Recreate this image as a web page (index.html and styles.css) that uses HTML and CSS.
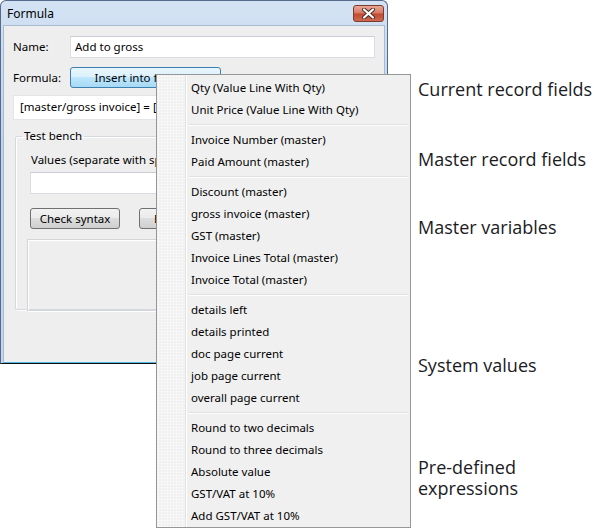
FILE: index.html
```html
<!DOCTYPE html>
<html>
<head>
<meta charset="utf-8">
<link rel="stylesheet" href="styles.css">
</head>
<body>
<div class="canvas">
  <div class="dialog">
    <div class="titlebar">
      <span class="title">Formula</span>
      <div class="close">
        <svg width="17" height="11" viewBox="0 0 17 11">
          <path d="M4 1.5 L13 9.5 M13 1.5 L4 9.5" stroke="#4a2a24" stroke-width="4" stroke-linecap="round"/>
          <path d="M4 1.5 L13 9.5 M13 1.5 L4 9.5" stroke="#ffffff" stroke-width="2.2" stroke-linecap="round"/>
        </svg>
      </div>
    </div>
    <div class="client">
      <div class="row row-name">
        <span class="lbl">Name:</span>
        <div class="input name-input">Add to gross</div>
      </div>
      <div class="row row-formula">
        <span class="lbl">Formula:</span>
        <div class="btn btn-hover insert-btn">Insert into formula</div>
      </div>
      <div class="input formula-field">[master/gross invoice] = [master/gross invoice] + [master/GST]</div>
      <fieldset class="group">
        <legend>Test bench</legend>
        <div class="values-lbl">Values (separate with spaces):</div>
        <div class="input values-input"></div>
        <div class="btn-row">
          <div class="btn check-btn">Check syntax</div>
          <div class="btn eval-btn">Evaluate</div>
        </div>
        <div class="result"></div>
      </fieldset>
    </div>
  </div>

  <div class="popup">
    <div class="menu">
      <div class="gutter"></div>
      <div class="items">
        <div class="item">Qty (Value Line With Qty)</div>
        <div class="item">Unit Price (Value Line With Qty)</div>
        <div class="sep"></div>
        <div class="item">Invoice Number (master)</div>
        <div class="item">Paid Amount (master)</div>
        <div class="sep"></div>
        <div class="item">Discount (master)</div>
        <div class="item">gross invoice (master)</div>
        <div class="item">GST (master)</div>
        <div class="item">Invoice Lines Total (master)</div>
        <div class="item">Invoice Total (master)</div>
        <div class="sep"></div>
        <div class="item">details left</div>
        <div class="item">details printed</div>
        <div class="item">doc page current</div>
        <div class="item">job page current</div>
        <div class="item">overall page current</div>
        <div class="sep"></div>
        <div class="item">Round to two decimals</div>
        <div class="item">Round to three decimals</div>
        <div class="item">Absolute value</div>
        <div class="item">GST/VAT at 10%</div>
        <div class="item">Add GST/VAT at 10%</div>
      </div>
    </div>
    <div class="notes">
      <div class="note n1">Current record fields</div>
      <div class="note n2">Master record fields</div>
      <div class="note n3">Master variables</div>
      <div class="note n4">System values</div>
      <div class="note n5">Pre-defined<br>expressions</div>
    </div>
  </div>
</div>
</body>
</html>
```

FILE: styles.css
```css
html, body {
  margin: 0;
  padding: 0;
  background: #ffffff;
}
body {
  font-family: "Noto Sans", "Open Sans", sans-serif;
  font-size: 11.5px;
  color: #000;
}
.canvas {
  position: relative;
  width: 594px;
  height: 530px;
  overflow: hidden;
}

/* ---------- dialog ---------- */
.dialog {
  width: 388px;
  height: 364px;
  box-sizing: border-box;
  border: 1px solid #55698a;
  border-bottom-color: #111;
  border-radius: 6px 6px 0 0;
  background: linear-gradient(#d3e2f3, #bfd3ec 40%, #c3d6ee);
  padding: 0 2px;
  display: flex;
  flex-direction: column;
}
.titlebar {
  height: 24px;
  display: flex;
  align-items: center;
  justify-content: space-between;
  flex: none;
}
.title {
  padding-left: 4px;
  padding-top: 2px;
  font-size: 12px;
  line-height: 16px;
  color: #000;
}
.close {
  width: 31px;
  height: 17px;
  box-sizing: border-box;
  margin-right: 1px;
  margin-top: 1px;
  border: 1px solid #7a3a2e;
  border-radius: 3px;
  background: linear-gradient(#e9a896, #d77a65 45%, #c14a32 55%, #cf6a52);
  display: flex;
  align-items: center;
  justify-content: center;
}
.close svg { display: block; }

.client {
  flex: 1;
  background: #eeeeee;
  border: 1px solid #a7bbd3;
  border-bottom: 1px solid #4ab8e2;
  padding: 10px 9px 0 9px;
  display: flex;
  flex-direction: column;
  overflow: hidden;
}
.row {
  display: flex;
  align-items: center;
}
.lbl {
  width: 57px;
  flex: none;
  line-height: 16px;
}
.input {
  box-sizing: border-box;
  background: #fff;
  border: 1px solid #d9dde2;
  border-top-color: #c9ced4;
  line-height: 18px;
  padding: 1px 4px;
  white-space: nowrap;
  overflow: hidden;
}
.name-input {
  width: 306px;
  height: 22px;
}
.row-formula {
  margin-top: 9px;
}
.btn {
  box-sizing: border-box;
  height: 21px;
  border: 1px solid #707070;
  border-radius: 3px;
  background: linear-gradient(#f2f2f2, #ebebeb 50%, #dddddd 50%, #cfcfcf);
  display: flex;
  align-items: center;
  justify-content: center;
  white-space: nowrap;
}
.btn-hover {
  border-color: #3c7fb1;
  background: linear-gradient(#eaf6fd, #d9f0fc 50%, #bee6fd 50%, #a7d9f5);
}
.insert-btn {
  width: 151px;
}
.formula-field {
  margin-top: 7px;
  width: 362px;
  height: 25px;
  padding: 2px 6px;
  border-color: #e2e4e7;
}

.group {
  margin: 8px 0 0 2px;
  width: 358px;
  height: 182px;
  box-sizing: border-box;
  border: 1px solid #d5d9dd;
  box-shadow: inset 1px 1px 0 #fff, 1px 1px 0 #fff;
  border-radius: 2px;
  padding: 8px 0 0 15px;
  display: flex;
  flex-direction: column;
  min-width: 0;
}
.group legend {
  padding: 0 2px;
  margin-left: -9px;
  line-height: 16px;
}
.values-lbl {
  line-height: 16px;
}
.values-input {
  margin-top: 4px;
  margin-left: -1px;
  width: 330px;
  height: 22px;
}
.btn-row {
  display: flex;
  gap: 19px;
  margin-top: 14px;
  margin-left: -1px;
}
.check-btn {
  width: 90px;
}
.eval-btn {
  width: 90px;
  justify-content: flex-start;
  padding-left: 14px;
}
.result {
  margin-top: 10px;
  margin-left: -4px;
  width: 330px;
  height: 72px;
  box-sizing: border-box;
  border: 1px solid #d3d6d9;
  box-shadow: inset 1px 1px 0 #fff, 1px 1px 0 #fff;
}

/* ---------- popup menu ---------- */
.popup {
  position: absolute;
  left: 156px;
  top: 74px;
  display: flex;
  gap: 7px;
  align-items: flex-start;
}
.menu {
  width: 255px;
  box-sizing: border-box;
  border: 1px solid #979797;
  background: #f0f0f0;
  display: flex;
  padding: 2px 2px 0 0;
}
.gutter {
  width: 28px;
  flex: none;
  margin-top: -2px;
  border-right: 1px solid #e2e3e3;
  box-shadow: 1px 0 0 #ffffff;
  background-color: #f1f1f1;
  background-image: radial-gradient(circle, #fbfbfb 0.8px, transparent 1.1px);
  background-size: 3px 3px;
}
.items {
  flex: 1;
  padding-left: 1px;
}
.item {
  height: 22px;
  line-height: 22px;
  padding-left: 4px;
  white-space: nowrap;
  color: #000;
}
.sep {
  height: 8px;
  margin-left: 2px;
  box-sizing: border-box;
  padding-top: 3px;
}
.sep::before {
  content: "";
  display: block;
  height: 1px;
  background: #e0e0e0;
  border-bottom: 1px solid #ffffff;
}

/* ---------- annotations ---------- */
.notes {
  display: flex;
  flex-direction: column;
  padding-top: 5px;
  font-family: "Open Sans", "Noto Sans", sans-serif;
  font-size: 18px;
  line-height: 21px;
  color: #1b1b24;
  white-space: nowrap;
}
.n2 { margin-top: 49px; }
.n3 { margin-top: 47px; }
.n4 { margin-top: 117px; }
.n5 { margin-top: 81px; }
```
